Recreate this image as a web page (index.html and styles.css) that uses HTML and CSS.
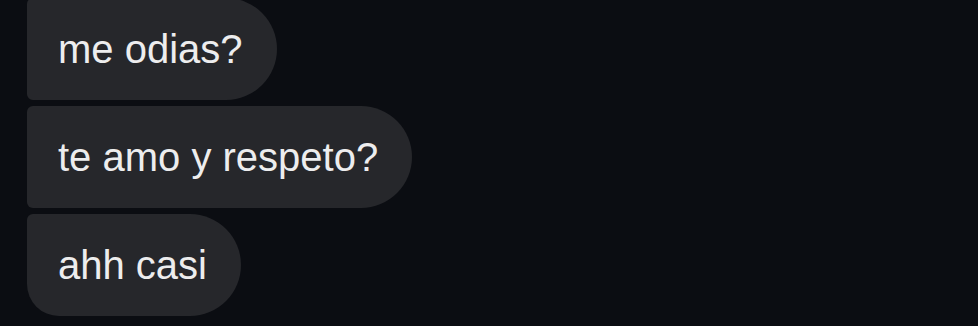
FILE: index.html
```html
<!DOCTYPE html>
<html lang="es">
  <head>
    <meta charset="UTF-8" />
    <meta name="viewport" content="width=device-width, initial-scale=1.0" />
    <title>Mensajes</title>
    <link rel="stylesheet" href="styles.css">
  </head>
  <body>
    <div class="thread">
      <div class="bubble first">me odias?</div>
      <div class="bubble">te amo y respeto?</div>
      <div class="bubble last">ahh casi</div>
    </div>
  </body>
</html>
```

FILE: styles.css
```css
html,
body {
  margin: 0;
  height: 100%;
  background-color: #0b0d12;
  overflow: hidden;
}
.thread {
  display: flex;
  flex-direction: column;
  align-items: flex-start;
  gap: 6px;
  padding-left: 27px;
  margin-top: -2px;
}
.bubble {
  font-family: "Liberation Sans", Arial, sans-serif;
  font-size: 40px;
  line-height: 46px;
  color: #ededee;
  background-color: #26272b;
  padding: 28px 34px 28px 31px;
  border-radius: 6px 51px 51px 6px;
}
.bubble.last {
  border-bottom-left-radius: 32px;
}
```
